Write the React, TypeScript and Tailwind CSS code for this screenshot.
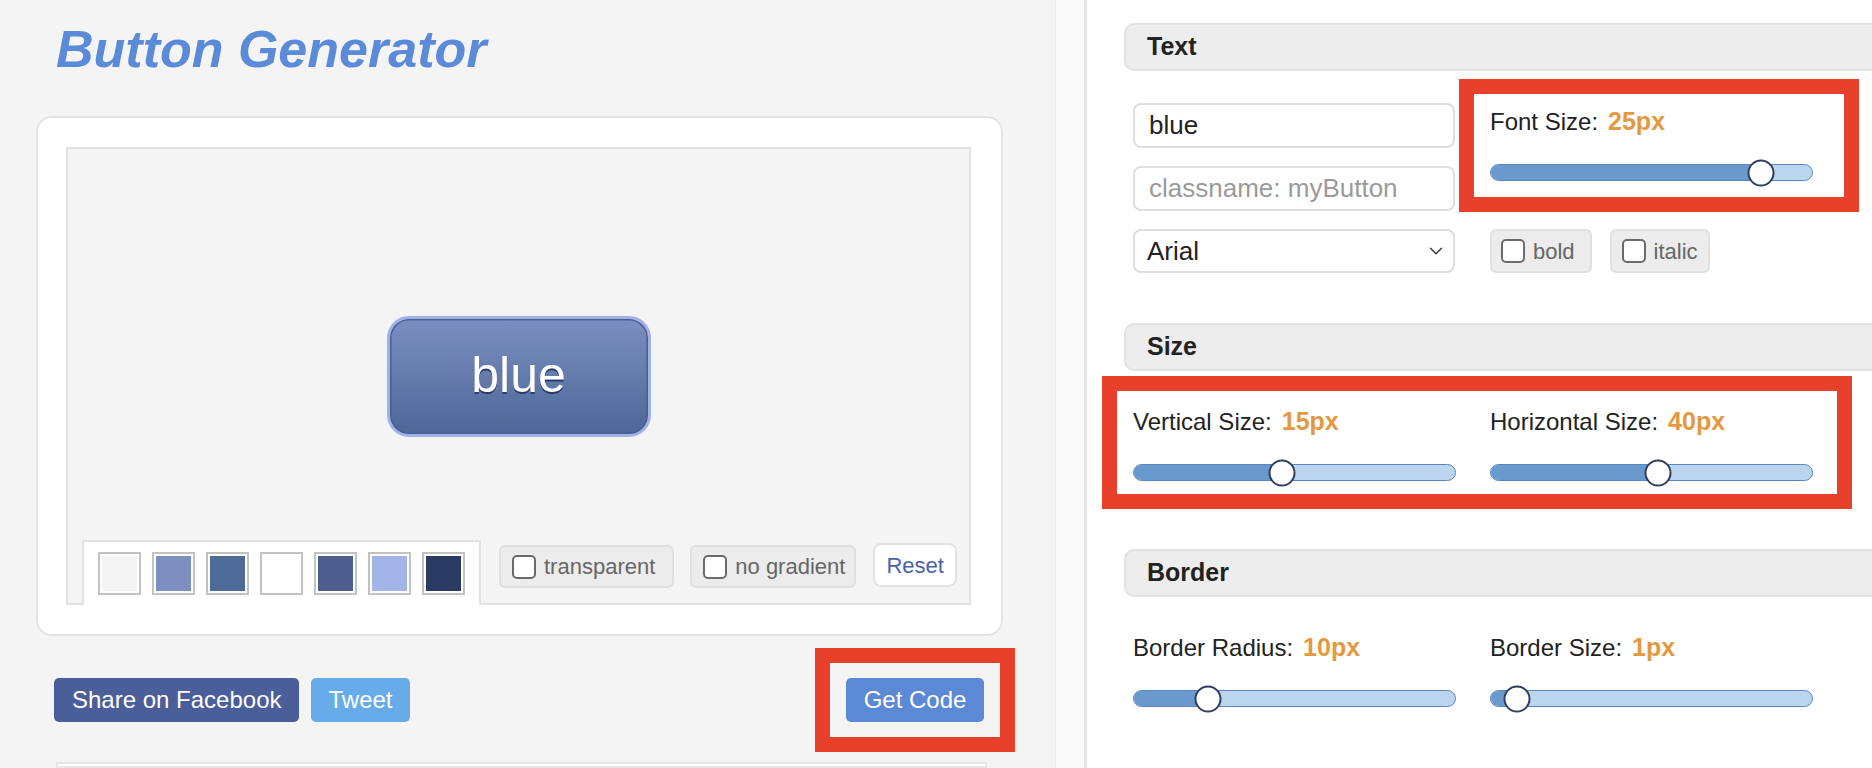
import { ChevronDown } from "lucide-react";

const swatches = ["#f4f4f4", "#7c8fbf", "#4e6a97", "#ffffff", "#4f5e8f", "#a2b4e8", "#2b3a62"];

function Slider({ pct }: { pct: number }) {
  return (
    <div className="relative h-[17px] w-[323px] rounded-full border-[1.5px] border-[#5a87bf] bg-[#bcd5ef]">
      <div className="h-full rounded-l-full bg-[#6a9acd]" style={{ width: `${pct}%` }} />
      {/* thumb sits over the track */}
      <div
        className="absolute top-1/2 h-[27px] w-[27px] -translate-x-1/2 -translate-y-1/2 rounded-full border-2 border-[#2f3f5c] bg-white"
        style={{ left: `${pct}%` }}
      />
    </div>
  );
}

function Field({ label, value, pct }: { label: string; value: string; pct: number }) {
  return (
    <div>
      <div className="text-[24px] leading-[28px] text-[#222]">
        {label}
        <span className="ml-[10px] text-[25px] font-bold text-[#e5993f]">{value}</span>
      </div>
      <div className="mt-[28px]">
        <Slider pct={pct} />
      </div>
    </div>
  );
}

function Check({ label, className = "" }: { label: string; className?: string }) {
  return (
    <div
      className={`flex h-[43px] items-center gap-[8px] rounded-[6px] border-2 border-[#e0e0e0] bg-[#ececec] text-[22px] text-[#666] ${className}`}
    >
      <span className="h-[24px] w-[24px] rounded-[5px] border-2 border-[#6b6b6b] bg-white" />
      {label}
    </div>
  );
}

function Header({ title }: { title: string }) {
  return (
    <div className="flex h-[48px] w-[900px] items-center rounded-l-[10px] border-2 border-r-0 border-[#e2e2e2] bg-[#ededed] pl-[21px] text-[25px] font-bold text-[#222]">
      {title}
    </div>
  );
}

export default function App() {
  return (
    <div className="flex h-[768px] w-full overflow-hidden bg-white font-['Liberation_Sans',Arial,sans-serif]">
      {/* Left: preview */}
      <div className="flex w-[1055px] shrink-0 flex-col bg-[#f4f4f4]">
        <h1 className="ml-[56px] pt-[19px] text-[52px] font-bold italic leading-[60px] text-[#5b8ad8]">
          Button Generator
        </h1>

        <div className="ml-[36px] mt-[37px] h-[520px] w-[967px] rounded-[16px] border-2 border-[#e4e4e4] bg-white pb-[29px] pl-[28px] pr-[30px] pt-[29px]">
          <div className="relative flex h-[458px] items-center justify-center border-2 border-[#e2e2e2] bg-[#f4f4f4]">
            <div className="flex h-[121px] w-[264px] items-center justify-center rounded-[22px] border-[3px] border-[#a0b1e8] bg-linear-to-b from-[#7b8fc0] to-[#4d6797] pb-[2px] text-[50px] text-white shadow-[inset_0_0_0_1.5px_#4a5e93] [text-shadow:0_2px_0_#2b3b69]">
              blue
            </div>

            {/* colour tab + options along the bottom edge */}
            <div className="absolute -bottom-[2px] left-[14px] flex items-end">
              <div className="flex h-[65px] gap-[11px] border-2 border-b-0 border-[#e2e2e2] bg-white px-[14px] pt-[10px]">
                {swatches.map((c) => (
                  <div key={c} className="h-[43px] w-[43px] border-2 border-[#c2c2c2] bg-white p-[2px]">
                    <div className="h-full w-full" style={{ background: c }} />
                  </div>
                ))}
              </div>
              <Check label="transparent" className="mb-[17px] ml-[18px] pl-[11px] pr-[17px]" />
              <Check label="no gradient" className="mb-[17px] ml-[16px] pl-[11px] pr-[9px]" />
              <div className="mb-[18px] ml-[17px] flex h-[44px] items-center rounded-[8px] border-2 border-[#e2e2e2] bg-white px-[11px] text-[22px] text-[#4a62ad]">
                Reset
              </div>
            </div>
          </div>
        </div>

        <div className="ml-[54px] mt-[12px] flex w-[961px] items-center justify-between">
          <div className="flex gap-[12px] text-[24px] text-white">
            <div className="flex h-[44px] items-center rounded-[5px] bg-[#4a5e9a] px-[18px]">Share on Facebook</div>
            <div className="flex h-[44px] items-center rounded-[5px] bg-[#67abe8] px-[17px]">Tweet</div>
          </div>
          <div className="border-[15px] border-[#e8412b] px-[16px] py-[15px]">
            <div className="flex h-[44px] w-[138px] items-center justify-center rounded-[5px] bg-[#5c89d6] text-[24px] text-white">
              Get Code
            </div>
          </div>
        </div>

        <div className="ml-[56px] mt-[10px] h-[100px] w-[931px] border-2 border-[#e6e6e6] bg-white" />
      </div>

      {/* divider */}
      <div className="w-[32px] shrink-0 border-l border-r-[3px] border-l-[#ececec] border-r-[#e6e6e6] bg-[#f9f9f9]" />

      {/* Right: settings */}
      <div className="min-w-0 flex-1 overflow-hidden bg-white pl-[37px] pt-[23px]">
        <Header title="Text" />
        <div className="ml-[9px] mt-[32px] grid grid-cols-[322px_323px] gap-x-[35px]">
          <div className="flex flex-col gap-[18px] text-[26px]">
            <div className="flex h-[45px] items-center rounded-[8px] border-2 border-[#dedede] bg-white pl-[14px] text-[#222]">
              blue
            </div>
            <div className="flex h-[45px] items-center rounded-[8px] border-2 border-[#dedede] bg-white pl-[14px] text-[#9a9a9a]">
              classname: myButton
            </div>
            <div className="flex h-[44px] items-center justify-between rounded-[8px] border-2 border-[#dedede] bg-white pl-[12px] pr-[6px] text-[#222]">
              Arial
              <ChevronDown size={22} strokeWidth={1.5} color="#333" />
            </div>
          </div>
          <div>
            <div className="relative pt-[4px]">
              <Field label="Font Size:" value="25px" pct={84} />
              <div className="pointer-events-none absolute -left-[31px] -top-[24px] h-[133px] w-[400px] border-[15px] border-[#e8412b]" />
            </div>
            <div className="mt-[48px] flex gap-[18px]">
              <Check label="bold" className="h-[44px] pl-[9px] pr-[15px]" />
              <Check label="italic" className="h-[44px] pl-[10px] pr-[10px]" />
            </div>
          </div>
        </div>

        <div className="mt-[50px]">
          <Header title="Size" />
        </div>
        <div className="relative ml-[9px] mt-[36px] grid w-[680px] grid-cols-[322px_323px] gap-x-[35px]">
          <Field label="Vertical Size:" value="15px" pct={46} />
          <Field label="Horizontal Size:" value="40px" pct={52} />
          <div className="pointer-events-none absolute -left-[31px] -top-[31px] h-[133px] w-[750px] border-[15px] border-[#e8412b]" />
        </div>

        <div className="mt-[68px]">
          <Header title="Border" />
        </div>
        <div className="ml-[9px] mt-[36px] grid w-[680px] grid-cols-[322px_323px] gap-x-[35px]">
          <Field label="Border Radius:" value="10px" pct={23} />
          <Field label="Border Size:" value="1px" pct={8} />
        </div>
      </div>
    </div>
  );
}
